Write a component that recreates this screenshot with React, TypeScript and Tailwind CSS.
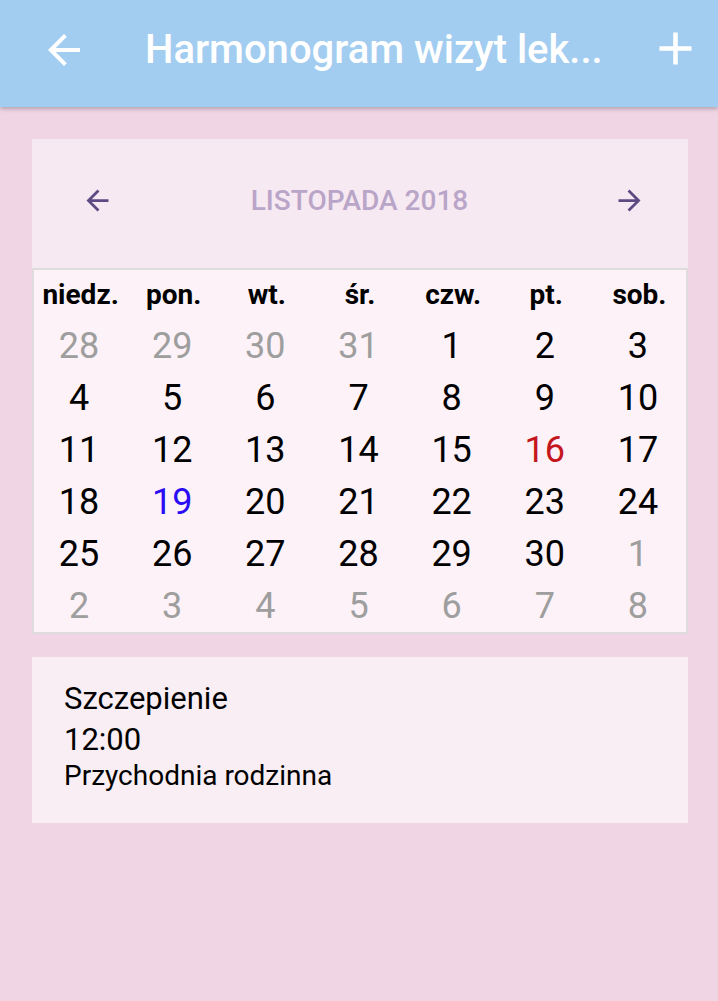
import React from "react";

type Cell = { d: number; muted?: boolean; color?: string };

const weeks: Cell[][] = [
  [{ d: 28, muted: true }, { d: 29, muted: true }, { d: 30, muted: true }, { d: 31, muted: true }, { d: 1 }, { d: 2 }, { d: 3 }],
  [{ d: 4 }, { d: 5 }, { d: 6 }, { d: 7 }, { d: 8 }, { d: 9 }, { d: 10 }],
  [{ d: 11 }, { d: 12 }, { d: 13 }, { d: 14 }, { d: 15 }, { d: 16, color: "red" }, { d: 17 }],
  [{ d: 18 }, { d: 19, color: "blue" }, { d: 20 }, { d: 21 }, { d: 22 }, { d: 23 }, { d: 24 }],
  [{ d: 25 }, { d: 26 }, { d: 27 }, { d: 28 }, { d: 29 }, { d: 30 }, { d: 1, muted: true }],
  [{ d: 2, muted: true }, { d: 3, muted: true }, { d: 4, muted: true }, { d: 5, muted: true }, { d: 6, muted: true }, { d: 7, muted: true }, { d: 8, muted: true }],
];

const dayNames = ["niedz.", "pon.", "wt.", "śr.", "czw.", "pt.", "sob."];

function cellClass(c: Cell) {
  if (c.muted) return "text-[#9e9e9e]";
  if (c.color === "red") return "text-[#c5161d]";
  if (c.color === "blue") return "text-[#2a0cf5]";
  return "text-black";
}

const ArrowBack = ({ className }: { className?: string }) => (
  <svg viewBox="0 0 24 24" className={className} fill="currentColor">
    <path d="M20 11H7.83l5.59-5.59L12 4l-8 8 8 8 1.41-1.41L7.83 13H20v-2z" />
  </svg>
);

const ArrowForward = ({ className }: { className?: string }) => (
  <svg viewBox="0 0 24 24" className={className} fill="currentColor">
    <path d="M12 4l-1.41 1.41L16.17 11H4v2h12.17l-5.58 5.59L12 20l8-8z" />
  </svg>
);

const Plus = ({ className }: { className?: string }) => (
  <svg viewBox="0 0 24 24" className={className} fill="currentColor">
    <path d="M19 13h-6v6h-2v-6H5v-2h6V5h2v6h6v2z" />
  </svg>
);

export default function App() {
  return (
    <div
      className="w-[718px] h-[1001px] bg-[#f0d6e5] overflow-hidden"
      style={{ fontFamily: "Roboto, 'Noto Sans', sans-serif" }}
    >
      <header className="relative z-10 h-[107px] bg-[#a3cdf0] flex items-center shadow-[0_2px_4px_rgba(0,0,0,0.25)]">
        <div className="w-[48px] h-[48px] ml-[40px] mt-[-7px] text-white">
          <ArrowBack className="w-[48px] h-[48px]" />
        </div>
        <div className="ml-[57px] mt-[-7px] text-white text-[40px] font-medium leading-none whitespace-nowrap">
          Harmonogram wizyt lek...
        </div>
        <div className="ml-auto mr-[15px] mt-[-10px] text-white">
          <Plus className="w-[55px] h-[55px]" />
        </div>
      </header>

      <div className="ml-[32px] mr-[30px] mt-[32px]">
        <div className="h-[129px] bg-[#f6e9f2] flex items-center pb-[6px] pl-[49px] pr-[42px]">
          <div className="w-[33px] h-[33px] text-[#5e4a82]">
            <ArrowBack className="w-[33px] h-[33px]" />
          </div>
          <div className="flex-1 pr-[8px] text-center text-[#b9a5c8] text-[28px] font-medium leading-none">
            LISTOPADA 2018
          </div>
          <div className="w-[33px] h-[33px] text-[#5e4a82]">
            <ArrowForward className="w-[33px] h-[33px]" />
          </div>
        </div>
        <div className="border-2 border-[#dedcdd] bg-[#fcf2f7]">
          <div className="grid grid-cols-7 h-[50px] items-center">
            {dayNames.map((n) => (
              <div key={n} className="text-center text-black text-[28px] font-bold leading-none">
                {n}
              </div>
            ))}
          </div>
          {weeks.map((w, i) => (
            <div key={i} className="grid grid-cols-7 h-[52px] items-center">
              {w.map((c, j) => (
                <div key={j} className={`pr-[3px] text-center text-[36px] leading-none ${cellClass(c)}`}>
                  {c.d}
                </div>
              ))}
            </div>
          ))}
        </div>
      </div>

      <div className="ml-[32px] mr-[30px] mt-[23px] bg-[#f8eef4] pt-[21px] pb-[31px] px-[32px] text-black">
        <div className="text-[31px] leading-[41px]">Szczepienie</div>
        <div className="text-[31px] leading-[41px]">12:00</div>
        <div className="text-[28px] leading-[32px]">Przychodnia rodzinna</div>
      </div>
    </div>
  );
}
